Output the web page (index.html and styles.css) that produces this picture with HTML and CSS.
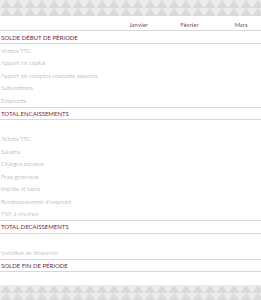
FILE: index.html
```html
<!DOCTYPE html>
<html lang="fr">
<head>
<meta charset="utf-8">
<link rel="stylesheet" href="styles.css">
</head>
<body>
<div class="page">
  <svg class="band" width="261" height="16" aria-hidden="true">
    <defs>
      <pattern id="tri" width="12" height="8" patternUnits="userSpaceOnUse">
        <rect width="12" height="8" fill="#ececec"/>
        <polygon points="0,8 6,0 12,8" fill="#dadada"/>
      </pattern>
    </defs>
    <rect width="261" height="16" fill="url(#tri)"/>
  </svg>
  <div class="sheet">
    <div class="row head"><span></span><span class="m">Janvier</span><span class="m">Février</span><span class="m last">Mars</span></div>
    <div class="row total"><span>SOLDE DÉBUT DE PÉRIODE</span></div>
    <div class="row"><span>Ventes TTC</span></div>
    <div class="row"><span>Apport en capital</span></div>
    <div class="row"><span>Apport en comptes courants associés</span></div>
    <div class="row"><span>Subventions</span></div>
    <div class="row"><span>Emprunts</span></div>
    <div class="row total"><span>TOTAL ENCAISSEMENTS</span></div>
    <div class="row"><span></span></div>
    <div class="row"><span>Achats TTC</span></div>
    <div class="row"><span>Salaires</span></div>
    <div class="row"><span>Charges sociales</span></div>
    <div class="row"><span>Frais généraux</span></div>
    <div class="row"><span>Impôts et taxes</span></div>
    <div class="row"><span>Remboursement d'emprunt</span></div>
    <div class="row"><span>TVA à reverser</span></div>
    <div class="row total"><span>TOTAL DECAISSEMENTS</span></div>
    <div class="row"><span></span></div>
    <div class="row"><span>Variation de trésorerie</span></div>
    <div class="row total"><span>SOLDE FIN DE PÉRIODE</span></div>
    <div class="row"><span></span></div>
  </div>
  <svg class="band" width="261" height="16" aria-hidden="true">
    <rect width="261" height="16" fill="url(#tri)"/>
  </svg>
</div>
</body>
</html>
```

FILE: styles.css
```css
html, body {
  margin: 0;
  padding: 0;
  background: #ffffff;
}
.page {
  width: 261px;
  height: 300px;
  overflow: hidden;
  font-family: Lato, "Open Sans", sans-serif;
}
.band {
  display: block;
}
.sheet {
  display: flex;
  flex-direction: column;
}
.row {
  display: grid;
  grid-template-columns: 113px 51px 51px 46px;
  height: 12.5px;
  align-items: center;
  font-size: 6px;
  font-weight: 300;
  color: #8c8c8c;
  white-space: nowrap;
}
.row > span:first-child {
  padding-left: 1px;
}
.row.head {
  height: 15px;
  box-sizing: border-box;
  border-bottom: 1px solid #d8d8d8;
  color: #8a4a64;
  font-weight: 400;
  padding-top: 2px;
}
.m {
  text-align: center;
}
.m.last {
  padding-left: 6px;
}
.row.total {
  height: 13px;
  box-sizing: border-box;
  border-bottom: 1px solid #d8d8d8;
  color: #6e2a45;
  font-weight: 400;
}
.row:not(.total):not(.head) + .row.total {
  border-top: 1px solid #d8d8d8;
  height: 13.5px;
}
```
